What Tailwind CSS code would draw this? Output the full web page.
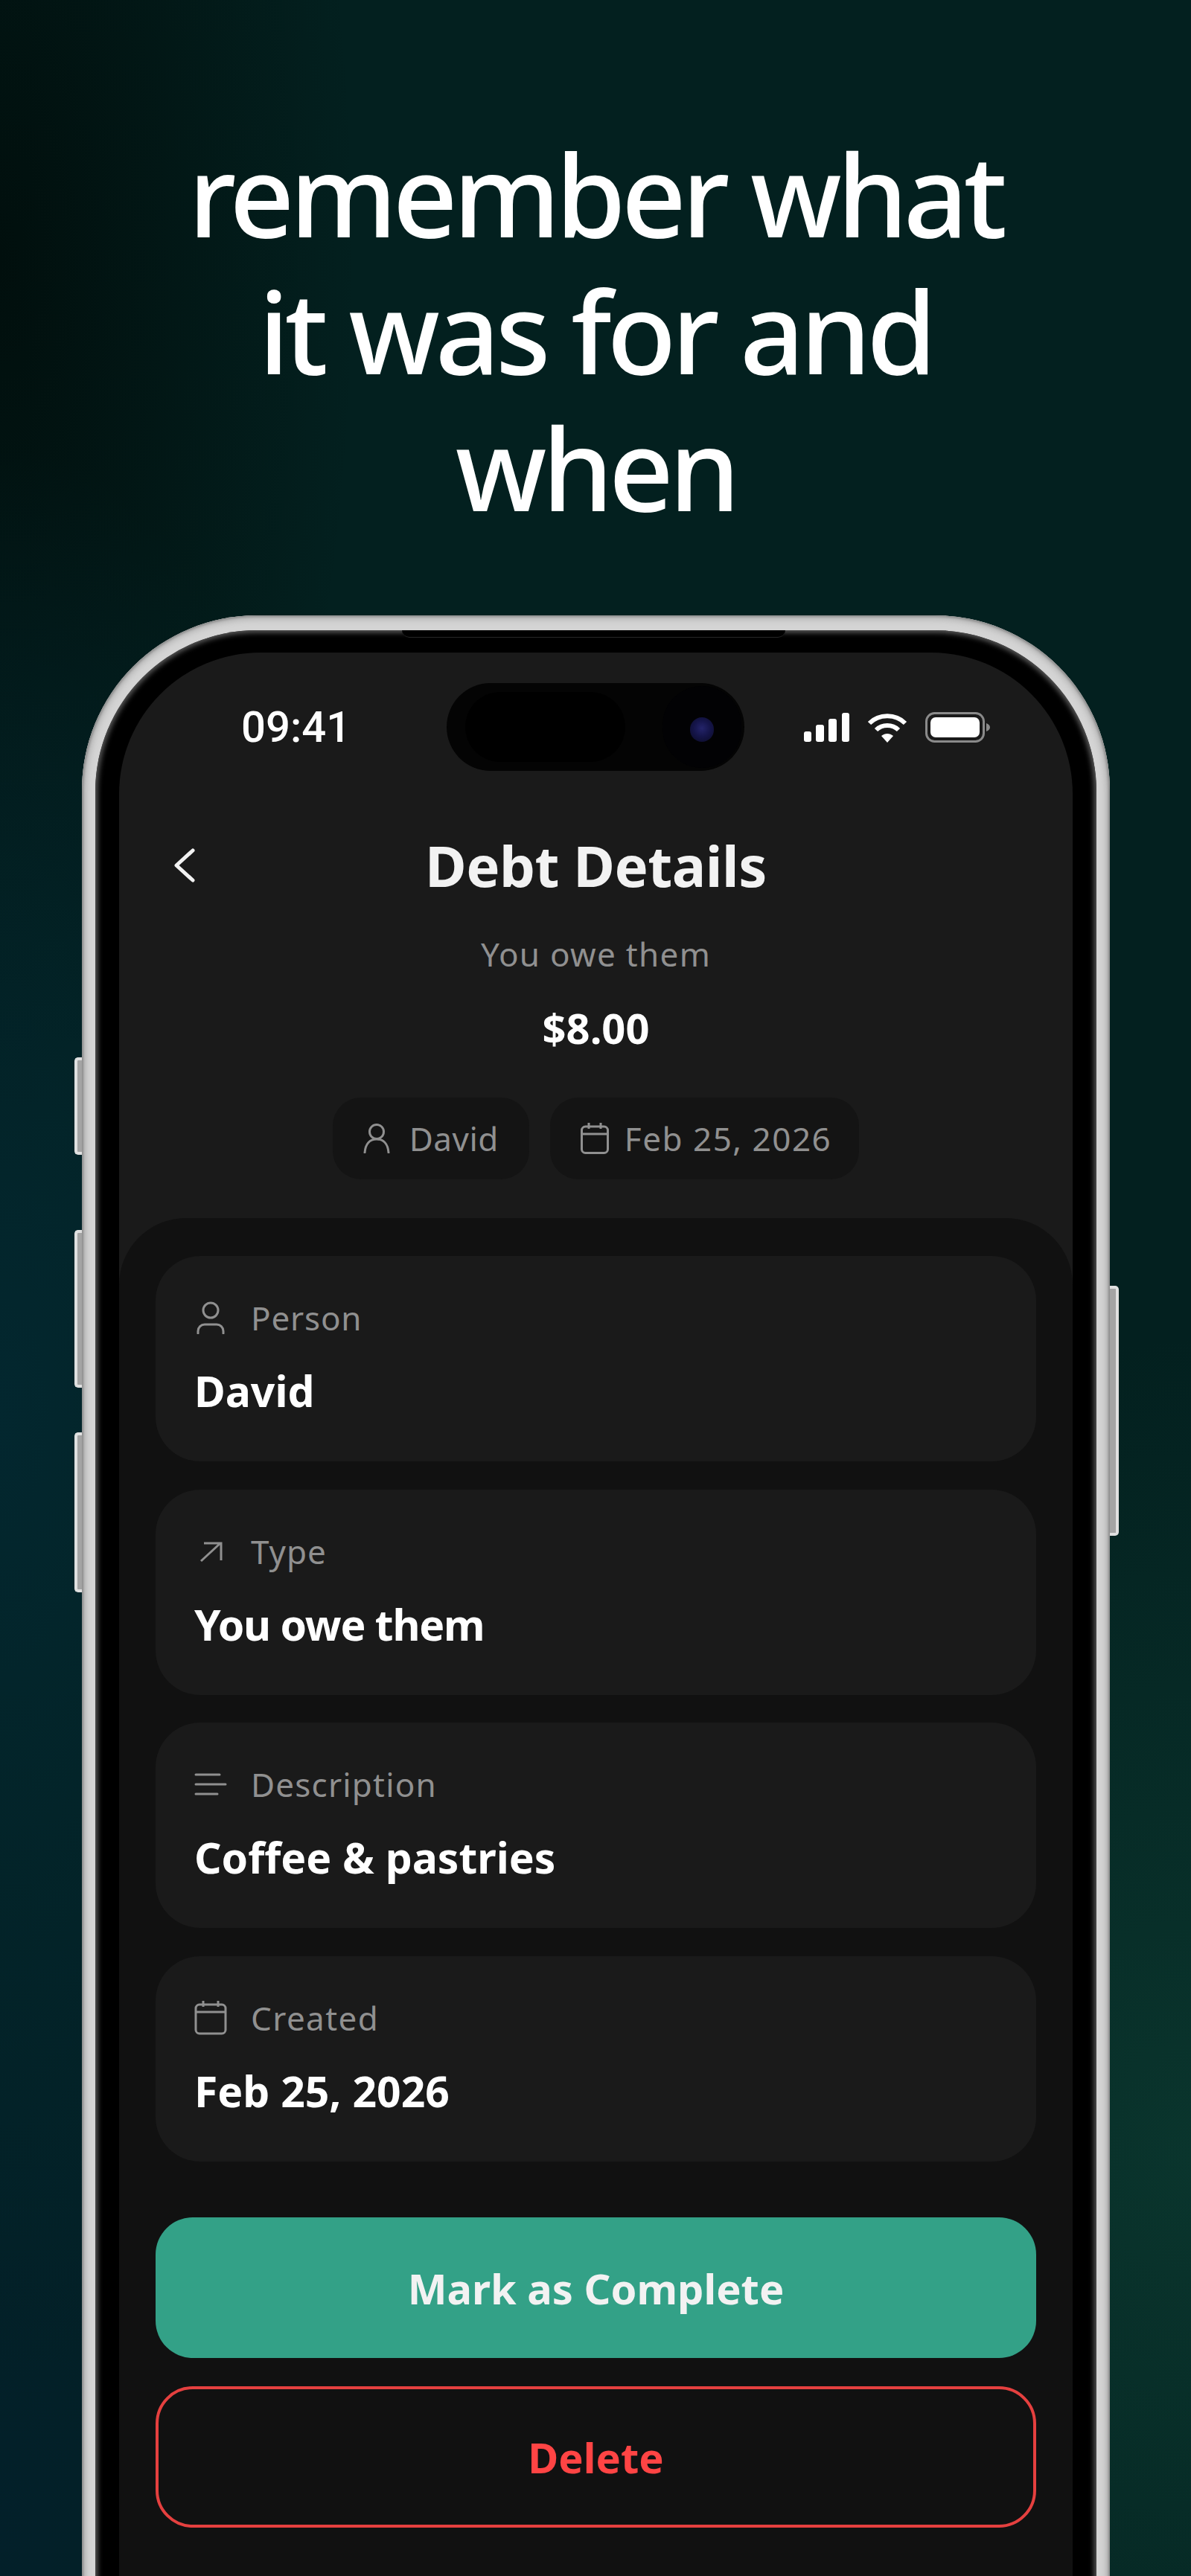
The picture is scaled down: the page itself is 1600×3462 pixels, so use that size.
<!doctype html>
<html><head><script src="https://cdn.jsdelivr.net/npm/@tailwindcss/browser@4"></script></head>
<body class="m-0">
<div class="relative w-[1600px] h-[3462px] overflow-hidden font-['Noto_Sans',sans-serif] bg-[radial-gradient(ellipse_520px_1300px_at_0%_1900px,#03272f_0%,#03272f00_100%),radial-gradient(ellipse_600px_1300px_at_0%_3400px,#03202a_0%,#03202a00_100%),radial-gradient(ellipse_800px_1100px_at_100%_2900px,#0a352d_0%,#0a352d00_100%),radial-gradient(ellipse_480px_1300px_at_0%_350px,#010f0d_0%,#010f0d00_100%),linear-gradient(180deg,#03201f_0%,#03201f_100%)]">
  <h1 class="pt-[169px] text-center text-white text-[152px] leading-[184px] tracking-[-6px] font-medium">remember what<br>it was for and<br>when</h1>

  <div class="relative mt-[106px] ml-[110px] w-[1381px] h-[3000px]">
    <!-- side buttons -->
    <div class="absolute left-[-10px] top-[594px] w-[16px] h-[131px] rounded-l-[5px] bg-[#a4a4a4] border-l-[4px] border-y-[4px] border-[#e0e0e0]"></div>
    <div class="absolute left-[-10px] top-[826px] w-[16px] h-[212px] rounded-l-[5px] bg-[#a4a4a4] border-l-[4px] border-y-[4px] border-[#e0e0e0]"></div>
    <div class="absolute left-[-10px] top-[1098px] w-[16px] h-[215px] rounded-l-[5px] bg-[#a4a4a4] border-l-[4px] border-y-[4px] border-[#e0e0e0]"></div>
    <div class="absolute right-[-12px] top-[901px] w-[18px] h-[336px] rounded-r-[5px] bg-[#a4a4a4] border-r-[4px] border-y-[4px] border-[#e0e0e0]"></div>

    <!-- silver frame -->
    <div class="relative rounded-[235px] pt-[20px] px-[18px] h-full bg-[#d4d4d4] shadow-[inset_0_0_3px_2px_#8c8c8c,inset_0_0_8px_5px_#b0b0b0]">
      <div class="relative rounded-[217px] pt-[30px] px-[32px] h-full bg-black shadow-[inset_0_0_7px_3px_#5e5e5e]">
        <div class="absolute left-[412px] top-0 w-[515px] h-[10px] bg-black rounded-b-[10px] border-b border-[#262626]"></div>
        <!-- screen -->
        <div class="relative rounded-t-[190px] h-full overflow-hidden bg-[#1a1a1a]">
          <!-- status bar -->
          <div class="flex items-center h-[118px] mt-[41px] pl-[164px]">
            <span class="block w-[276px] text-[58px] leading-[60px] font-medium text-white font-['Roboto',sans-serif]">09:41</span>
            <div class="relative w-[400px] h-[118px] rounded-[59px] bg-[#040404] shrink-0">
              <div class="absolute left-[25px] top-[12px] w-[215px] h-[94px] rounded-[47px] bg-black"></div>
              <div class="absolute left-[290px] top-[4px] w-[106px] h-[110px] rounded-full bg-[#020204]"></div>
              <div class="absolute left-[327px] top-[46px] w-[32px] h-[33px] rounded-full bg-[radial-gradient(circle_at_50%_45%,#24246a_0%,#15154a_45%,#0a0a22_100%)]"></div>
            </div>
            <svg class="ml-[80px] shrink-0" width="61" height="39" viewBox="0 0 61 39" fill="#fff"><rect x="0" y="25" width="10" height="14" rx="3"/><rect x="16" y="16" width="11" height="23" rx="3"/><rect x="33" y="8" width="11" height="31" rx="3"/><rect x="51" y="0" width="10" height="39" rx="3"/></svg>
            <svg class="ml-[24px] shrink-0" width="54" height="41" viewBox="0 0 54 41" fill="none" stroke="#fff"><path d="M3 15C16 2 38 2 51 15" stroke-width="6"/><path d="M12 24C20 16 34 16 42 24" stroke-width="6"/><path d="M19 32C24 28 30 28 35 32L27 41Z" fill="#fff" stroke="none"/></svg>
            <svg class="ml-[24px] shrink-0" width="87" height="41" viewBox="0 0 87 41" fill="none"><rect x="1.5" y="1.5" width="77" height="38" rx="11" stroke="#8a8a8a" stroke-width="3"/><rect x="7" y="7" width="66" height="27" rx="7" fill="#fff"/><path d="M82 15c3 1 5 3 5 5.500s-2 4.500-5 5.500Z" fill="#8a8a8a"/></svg>
          </div>

          <!-- header -->
          <div class="grid grid-cols-[1fr_auto_1fr] items-center h-[90px] mt-[82px]">
            <svg class="ml-[74px]" width="28" height="46" viewBox="0 0 28 46" fill="none" stroke="#f2f2f2" stroke-width="5" stroke-linecap="round" stroke-linejoin="round"><path d="M25 3L3 23L25 43"/></svg>
            <h2 class="text-[76px] leading-[90px] font-bold text-[#f2f2f2] tracking-[-0.5px]">Debt Details</h2>
            <span></span>
          </div>

          <p class="mt-[44px] h-[60px] text-center text-[44px] leading-[60px] tracking-[1.3px] text-[#909090]">You owe them</p>
          <p class="mt-[34px] h-[70px] text-center text-[56px] leading-[70px] font-bold text-white">$8.00</p>

          <!-- chips -->
          <div class="flex justify-center gap-[28px] mt-[59px]">
            <div class="flex items-center h-[110px] pl-[41px] pr-[41px] gap-[26px] rounded-[38px] bg-[#141414]">
              <svg width="36" height="40" viewBox="0 0 36 40" fill="none" stroke="#909090" stroke-width="3"><circle cx="18" cy="11" r="9.500"/><path d="M2 39c1-12 7-18 16-18s15 6 16 18" stroke-linecap="round"/></svg>
              <span class="text-[44px] leading-[50px] tracking-[0.5px] text-[#909090]">David</span>
            </div>
            <div class="flex items-center h-[110px] pl-[41px] pr-[37px] gap-[21px] rounded-[38px] bg-[#141414]">
              <svg width="38" height="42" viewBox="0 0 38 42" fill="none" stroke="#909090" stroke-width="3"><rect x="1.500" y="5" width="35" height="35.500" rx="5"/><path d="M1.500 15H36.500M11 0V8M27 0V8"/></svg>
              <span class="text-[44px] leading-[50px] tracking-[1.5px] text-[#909090]">Feb 25, 2026</span>
            </div>
          </div>

          <!-- sheet -->
          <div class="mt-[52px] rounded-t-[90px] bg-[#111111] px-[49px] pt-[51px] h-[2000px] flex flex-col gap-[37.5px]">
            <div class="h-[276px] rounded-[60px] bg-[#1a1a1a] px-[52px] pt-[58px]">
              <div class="flex items-center gap-[32px] h-[50px]">
                <svg class="shrink-0" width="44" height="44" viewBox="0 0 44 44" fill="none" stroke="#909090" stroke-width="3" stroke-linecap="round"><circle cx="22" cy="12" r="10"/><path d="M5 43V40A9 9 0 0 1 14 31H30A9 9 0 0 1 39 40V43"/></svg>
                <span class="text-[44px] leading-[50px] tracking-[0.8px] text-[#909090]">Person</span>
              </div>
              <p class="mt-[38px] text-[57px] leading-[70px] font-bold text-white">David</p>
            </div>
            <div class="h-[276px] rounded-[60px] bg-[#1a1a1a] px-[52px] pt-[58px]">
              <div class="flex items-center gap-[32px] h-[50px]">
                <svg class="shrink-0" width="44" height="44" viewBox="0 0 44 44" fill="none" stroke="#909090" stroke-width="3"><path d="M9 35L35 11M13 11H36V34"/></svg>
                <span class="text-[44px] leading-[50px] tracking-[1px] text-[#909090]">Type</span>
              </div>
              <p class="mt-[38px] text-[57px] leading-[70px] tracking-[-1.2px] font-bold text-white">You owe them</p>
            </div>
            <div class="h-[276px] rounded-[60px] bg-[#1a1a1a] px-[52px] pt-[58px]">
              <div class="flex items-center gap-[32px] h-[50px]">
                <svg class="shrink-0" width="44" height="44" viewBox="0 0 44 44" fill="none" stroke="#909090" stroke-width="3" stroke-linecap="round"><path d="M2 9H34M2 22H42M2 35H31"/></svg>
                <span class="text-[44px] leading-[50px] tracking-[1.2px] text-[#909090]">Description</span>
              </div>
              <p class="mt-[38px] text-[57px] leading-[70px] font-bold text-white">Coffee &amp; pastries</p>
            </div>
            <div class="h-[276px] rounded-[60px] bg-[#1a1a1a] px-[52px] pt-[58px]">
              <div class="flex items-center gap-[32px] h-[50px]">
                <svg class="shrink-0" width="44" height="46" viewBox="0 0 44 46" fill="none" stroke="#909090" stroke-width="3"><rect x="2" y="5" width="40" height="39" rx="5"/><path d="M2 15H42M12 0V8M32 0V8"/></svg>
                <span class="text-[44px] leading-[50px] tracking-[1.4px] text-[#909090]">Created</span>
              </div>
              <p class="mt-[38px] text-[57px] leading-[70px] font-bold text-white">Feb 25, 2026</p>
            </div>

            <div class="mt-[38px] h-[189px] flex items-center justify-center rounded-[50px] bg-[#33a187] text-[56px] leading-[70px] font-bold text-[#f2f2f2]">Mark as Complete</div>
            <div class="h-[190px] flex items-center justify-center rounded-[50px] border-[4px] border-[#e5403f] text-[56px] leading-[70px] font-bold text-[#ff4444]">Delete</div>
          </div>
        </div>
      </div>
    </div>
  </div>
</div>
</body></html>
